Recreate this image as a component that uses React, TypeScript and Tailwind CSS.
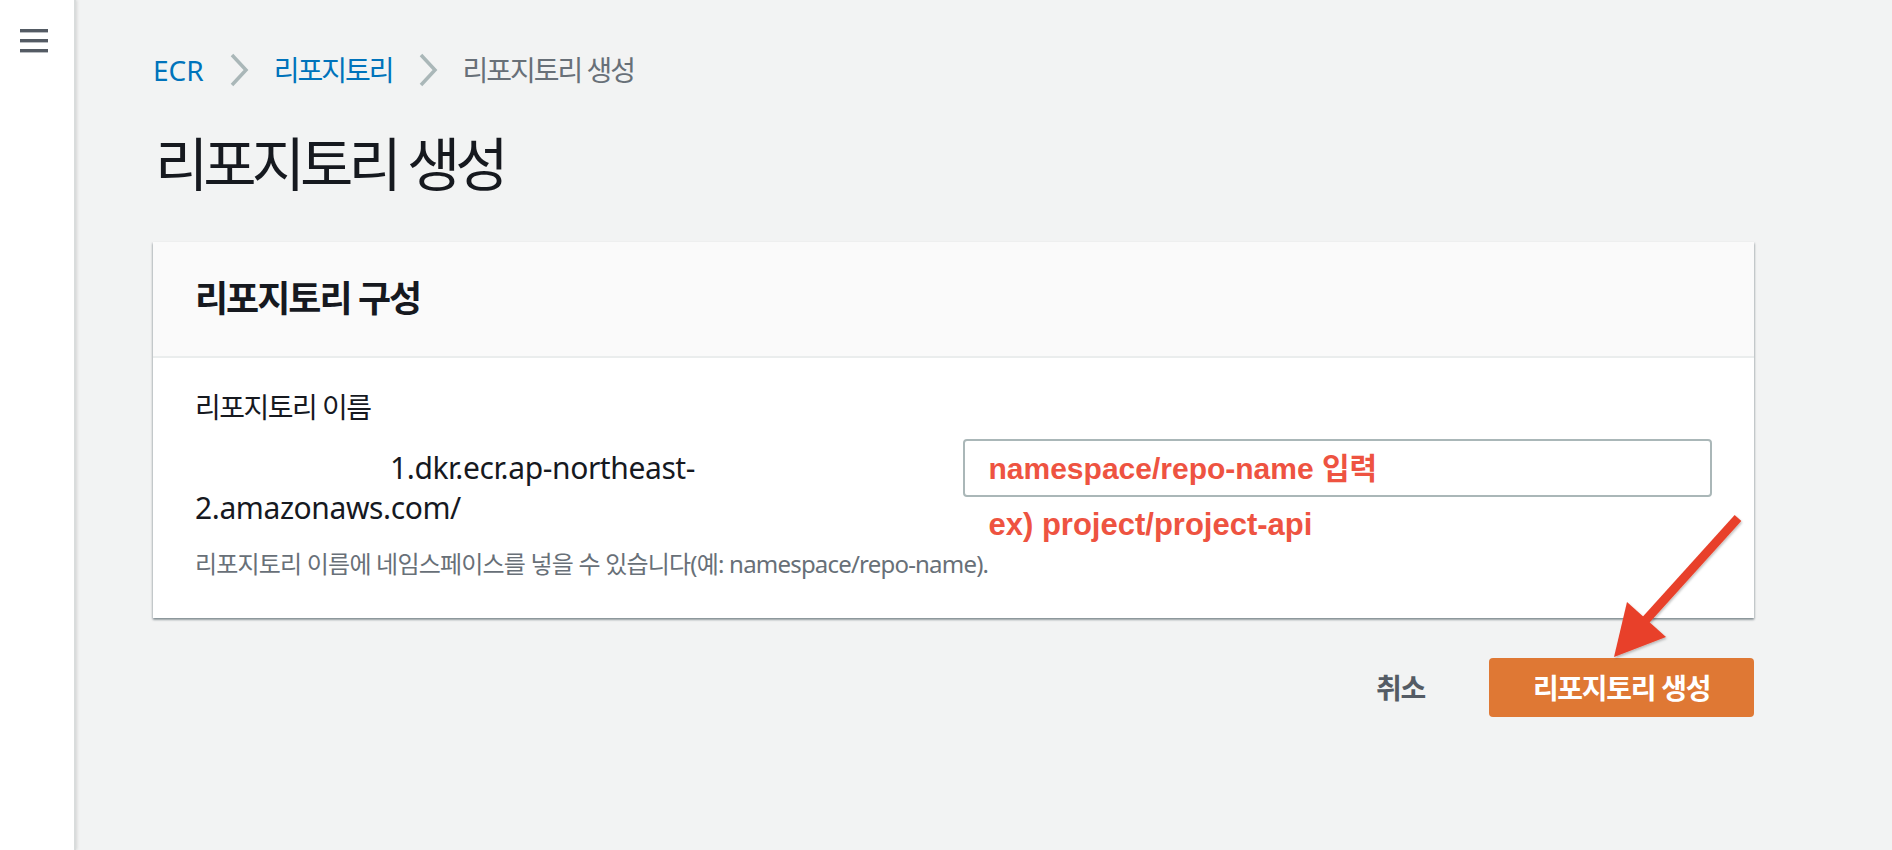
import React from "react";

const ui = "font-['Noto_Sans','Noto_Sans_CJK_KR',sans-serif]";
const note = "font-['Liberation_Sans','Noto_Sans_CJK_KR',sans-serif]";

const Chevron = () => (
  <svg width="20" height="34" viewBox="0 0 20 34" fill="none">
    <path d="M3 2 L17 17 L3 32" stroke="#aab7b8" strokeWidth="3.5" />
  </svg>
);

const Hamburger = () => (
  <svg width="28" height="24" viewBox="0 0 28 24" fill="#545b64">
    <rect x="0" y="0" width="28" height="3.4" />
    <rect x="0" y="10" width="28" height="3.4" />
    <rect x="0" y="20" width="28" height="3.4" />
  </svg>
);

// red annotation arrow drawn over the screenshot
const Arrow = () => (
  <svg className="pointer-events-none absolute left-0 top-0" width="1892" height="850">
    <defs>
      <filter id="sh" x="-20%" y="-20%" width="140%" height="140%">
        <feDropShadow dx="1" dy="1.5" stdDeviation="1.2" floodColor="#000" floodOpacity="0.25" />
      </filter>
    </defs>
    <g filter="url(#sh)" fill="#e8402a">
      <line x1="1738" y1="518" x2="1644" y2="622" stroke="#e8402a" strokeWidth="9" />
      <polygon points="1627,602 1666,637 1614,657" />
    </g>
  </svg>
);

export default function App() {
  return (
    <div className={`relative flex h-[850px] w-full overflow-hidden bg-[#f2f3f3] text-[#16191f] ${ui}`}>
      <aside className="z-10 w-[76px] shrink-0 border-r-2 border-[#d9dcdc] bg-white shadow-[1px_0_3px_rgba(0,0,0,0.12)]">
        <div className="pl-[20px] pt-[29px]">
          <Hamburger />
        </div>
      </aside>

      <main className="flex-1 pl-[77px] pr-[138px] pt-[50px]">
        <nav className="flex h-[40px] items-center gap-[25px] text-[28px]">
          <span className="text-[#0073bb]">ECR</span>
          <Chevron />
          <span className="tracking-[-2px] text-[#0073bb]">리포지토리</span>
          <Chevron />
          <span className="tracking-[-2px] text-[#687078]">리포지토리 생성</span>
        </nav>

        <h1 className="mt-[38px] pl-[2px] text-[58px] leading-[72px] tracking-[-5px]">리포지토리 생성</h1>

        <section className="mt-[42px] bg-white shadow-[0_2px_2px_rgba(0,28,36,0.3),1px_1px_2px_rgba(0,28,36,0.15),-1px_1px_2px_rgba(0,28,36,0.15)]">
          <div className="flex h-[116px] items-center border-b-2 border-[#eaeded] bg-[#fafafa] px-[42px]">
            <h2 className="text-[36px] font-bold tracking-[-2px]">리포지토리 구성</h2>
          </div>
          <div className="px-[42px] pb-[38px] pt-[29px]">
            <div className="text-[28px] leading-[40px] tracking-[-1.5px]">리포지토리 이름</div>
            <div className="mt-[12px] grid grid-cols-2 gap-[18px]">
              <div className="pt-[9px] text-[30px] leading-[40px] tracking-[-0.4px]">
                <span className="pl-[195px]">1.dkr.ecr.ap-northeast-</span>
                <br />
                2.amazonaws.com/
              </div>
              <div>
                <div className={`flex h-[58px] items-center rounded-[4px] border-2 border-[#aab7b8] pl-[24px] text-[30px] font-bold text-[#ee5341] ${note}`}>
                  namespace/repo-name 입력
                </div>
                <div className={`ml-[26px] mt-[10px] text-[31px] font-bold leading-[36px] text-[#ee5341] ${note}`}>
                  ex) project/project-api
                </div>
              </div>
            </div>
            <p className="mt-[5px] text-[24px] leading-[32px] tracking-[-0.8px] text-[#687078]">
              리포지토리 이름에 네임스페이스를 넣을 수 있습니다(예: namespace/repo-name).
            </p>
          </div>
        </section>

        <div className="mt-[40px] flex items-center justify-end gap-[64px]">
          <button className="text-[28px] font-bold tracking-[-1.3px] text-[#545b64]">취소</button>
          <button className="h-[59px] w-[265px] rounded-[4px] bg-[#df7834] text-[28px] font-bold tracking-[-1.3px] text-white">
            리포지토리 생성
          </button>
        </div>
      </main>

      <Arrow />
    </div>
  );
}
